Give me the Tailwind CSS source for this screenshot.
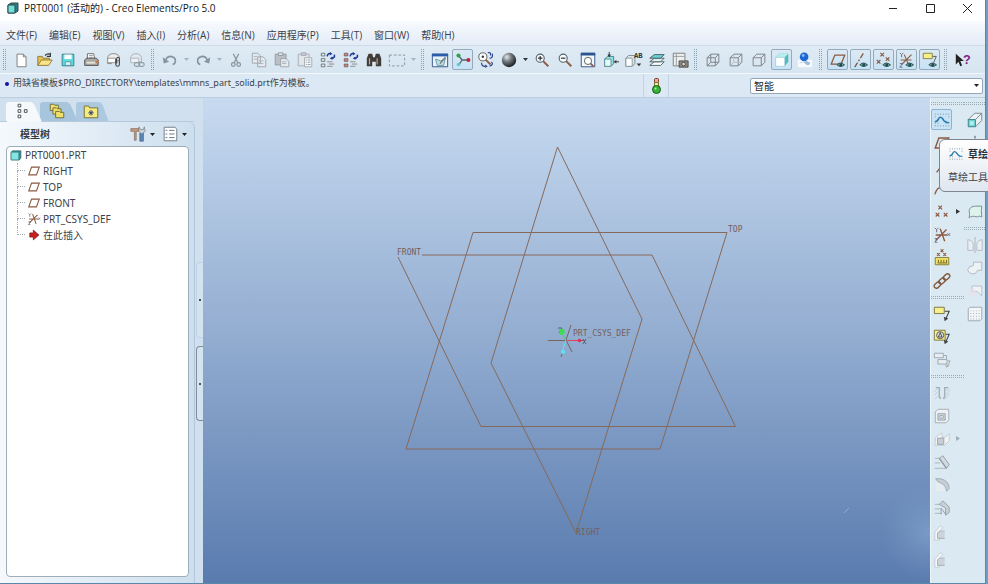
<!DOCTYPE html>
<html lang="zh-CN">
<head>
  <meta charset="UTF-8">
  <meta name="viewport" content="width=device-width, initial-scale=1">
  <title>PRT0001 (活动的) - Creo Elements/Pro 5.0</title>
  <script src="https://cdn.jsdelivr.net/npm/@tailwindcss/browser@4"></script>
</head>
<body class="h-screen overflow-hidden flex bg-[#6b9fc6] font-['Open_Sans','Noto_Sans_CJK_SC',sans-serif] text-[10px] leading-4 text-[#3c4148]">

  <div class="relative flex-1 min-w-0 mr-[2px] flex flex-col bg-[#dce9f4] border-r border-b border-[#5b88a8]">

    <!-- Title bar -->
    <header class="h-[21px] shrink-0 bg-white flex items-start pl-[6px] text-[#16181c]">
      <svg class="w-4 h-4 shrink-0" viewBox="0 0 16 16"><path d="M2 5l3-2h7v8l-3 2H2z" fill="#2e7f84" stroke="#31484e"/><path d="M2 5h7v8H2z" fill="#6fe0d8" stroke="#31484e"/></svg>
      <h1 class="pl-[2px]">PRT0001 (活动的) - Creo Elements/Pro 5.0</h1>
      <div class="ml-auto flex">
        <button aria-label="最小化" class="w-[37px] h-4 flex justify-center items-center"><svg class="w-3 h-3" viewBox="0 0 12 12" fill="none" stroke="#222"><path d="M2 6.500h8"/></svg></button>
        <button aria-label="最大化" class="w-[37px] h-4 flex justify-center items-center"><svg class="w-3 h-3" viewBox="0 0 12 12" fill="none" stroke="#222"><path d="M2.500 2.500h8v8h-8z"/></svg></button>
        <button aria-label="关闭" class="w-[37px] h-4 flex justify-center items-center"><svg class="w-3 h-3" viewBox="0 0 12 12" fill="none" stroke="#222"><path d="M2 2l9 9M11 2l-9 9"/></svg></button>
      </div>
    </header>

    <!-- Menu -->
    <nav id="menu" class="h-[25px] shrink-0 flex items-center gap-3 pl-[6px] pt-1 bg-linear-to-b from-[#f8fafe] to-[#e4ecf7] border-b border-[#cfdbe6]"></nav>

    <!-- Toolbars -->
    <div id="toolbar" class="h-[27px] shrink-0 flex items-center bg-linear-to-b from-[#dfebf5] to-[#d6e5f0]"></div>

    <!-- Message line and filter -->
    <div class="h-[25px] shrink-0 flex items-stretch border-y border-t-[#f3f8fc] border-b-[#b9cfe0] bg-[#dce9f4]">
      <div class="flex-1 flex items-start gap-1 pl-[5px] pt-px">
        <span class="w-1 h-1 mt-[7px] rounded-full bg-[#1414a8]"></span>
        <p class="font-['Noto_Sans','Noto_Sans_CJK_SC',sans-serif] text-[9px] whitespace-nowrap">用缺省模板$PRO_DIRECTORY\templates\mmns_part_solid.prt作为模板。</p>
      </div>
      <div class="w-[26px] border-x border-[#c3d3df] flex justify-center items-center">
        <svg class="w-4 h-[18px]" viewBox="0 0 16 18"><rect x="6.500" y="1.500" width="4" height="4" rx="1" fill="#f0a890" stroke="#743c2c"/><rect x="6.500" y="5.500" width="4" height="4" fill="#f3e9a0" stroke="#7b7430"/><circle cx="8.500" cy="12.500" r="4" fill="#36b336" stroke="#1a5a1a"/><circle cx="7.500" cy="11.500" r="1" fill="#c5f2c0"/></svg>
      </div>
      <div class="w-[316px] flex items-start justify-end pt-1 pr-[2px]">
        <div class="relative w-[233px]">
          <select aria-label="过滤器" class="appearance-none block w-full h-4 leading-[14px] pl-[3px] bg-white border border-[#93a7b6] rounded-xs text-[#222]"><option>智能</option></select>
          <svg class="absolute right-1 top-[6px] w-[5px] h-[3px] pointer-events-none" viewBox="0 0 5 3"><path d="M0 0h5L2.500 3z" fill="#222"/></svg>
        </div>
      </div>
    </div>

    <div class="flex-1 min-h-0 flex">

      <!-- Navigator -->
      <aside class="w-[203px] shrink-0 flex flex-col bg-[#d0e0ef]">
        <div role="tablist" class="h-6 shrink-0 relative">
          <svg class="w-full h-full" viewBox="0 0 203 24" preserveAspectRatio="none">
            <path d="M76 24V7q0-3 3-3h19q3 0 5 4l6 16z" fill="#adc9e0"/>
            <path d="M40 24V7q0-3 3-3h23q3 0 5 4l7 16z" fill="#a8c5de"/>
            <path d="M6 24V7q0-3 3-3h21q3 0 5 4l7 16z" fill="#f6f9fc"/>
            <path d="M0 23.500h194" stroke="#b6cadb"/><path d="M7 23.500h34" stroke="#f6f9fc"/>
          </svg>
          <div class="absolute inset-0 flex items-center gap-4 pl-[14px] pt-[2px]" id="tabs"></div>
        </div>
        <div class="flex-1 min-h-0 mr-2 rounded-tr-md border-r border-[#b2c8da] bg-linear-to-r from-[#f5f9fd] to-[#cddfee] flex flex-col pl-[6px] pr-[5px] pb-[6px]">
          <div class="h-6 shrink-0 flex items-center">
            <h2 class="pl-[14px] font-bold text-[#333a42]">模型树</h2>
            <div id="treeTools" class="ml-auto flex items-center"></div>
          </div>
          <ul id="tree" class="flex-1 min-h-0 bg-white border border-[#9eadb8] rounded-sm pl-[2px] font-['Noto_Sans','Noto_Sans_CJK_SC',sans-serif]"></ul>
        </div>
        <!-- Splitter handles lie over the panel edge -->
        <div class="absolute left-[196px] top-[262px] w-[7px] h-[76px] border border-r-0 border-[#c0d3e4] rounded-l-sm bg-[#d4e3f0] flex items-center justify-center"><span class="w-[2px] h-[2px] bg-[#455]"></span></div>
        <div class="absolute left-[196px] top-[346px] w-[7px] h-[75px] border border-r-0 border-[#7d8d9a] rounded-l-sm bg-[#d4e3f0] flex items-center justify-center"><span class="w-[2px] h-[2px] bg-[#455]"></span></div>
      </aside>

      <!-- Graphics window -->
      <main class="flex-1 min-w-0 bg-linear-to-b from-[#c7daf0] via-[#92acd0] to-[#597bae]">
        <svg class="w-full h-full" viewBox="203 98 727 485" preserveAspectRatio="xMidYMid meet">
          <defs>
            <radialGradient id="glow"><stop offset="0" stop-color="#86a9cf" stop-opacity=".6"/><stop offset="1" stop-color="#7d9dc6" stop-opacity="0"/></radialGradient>
          </defs>
          <ellipse cx="930" cy="533" rx="50" ry="48" fill="url(#glow)"/>
          <path d="M844 513l5-5" stroke="#90abd0"/>
          <g fill="none" stroke="#86695a">
            <path d="M557.500 147L642 319l-66 214-85-170z"/>
            <path d="M473 232.500h254l-67 216.500H406z"/>
            <path d="M398 257l83 169.500h254.500L652 255H422"/>
          </g>
          <g fill="none" stroke-width="1">
            <path d="M548 340.500h37M566 340l5-15M566 340l6 12M561 357l2-6" stroke="#76645f"/>
            <path d="M567 340.500h12" stroke="#e0405c"/><path d="M566 340l-4 12" stroke="#5be4f4"/><path d="M566 340l-5-8" stroke="#42d566"/>
            <path d="M583 339l3 5M586 339l-3 5M558 328h4l-3 5" stroke="#5d6070"/>
          </g>
          <circle cx="579.500" cy="340.500" r="1.800" fill="#e22f4f"/><circle cx="563" cy="352" r="2" fill="#5be4f4"/><path d="M559 329l5 0 1 4-5 2z" fill="#3fdb55"/>
          <g font-family="DejaVu Sans Mono, monospace" font-size="8" fill="#75605a">
            <text x="397" y="255">FRONT</text>
            <text x="728" y="232">TOP</text>
            <text x="573" y="336">PRT_CSYS_DEF</text>
            <text x="576" y="535">RIGHT</text>
          </g>
        </svg>
      </main>

      <!-- Feature toolbars -->
      <aside class="w-[55px] shrink-0 flex items-start bg-[#dbe9f3] border-l border-[#eef5fa]">
        <div id="featureA" class="w-[33px]"></div>
        <div id="featureB" class="flex-1"></div>
      </aside>
    </div>
  </div>

  <!-- Tooltip of the sketch tool -->
  <div class="absolute top-[139px] left-[calc(100%-49px)] right-0 h-[54px] overflow-hidden">
    <div role="tooltip" class="w-24 h-[53px] pl-2 pt-[6px] rounded-md border border-[#7d8791] bg-linear-to-b from-white to-[#dfe6f0] whitespace-nowrap">
      <div class="flex items-center gap-1 font-bold text-[#26303c]" id="tipHead"></div>
      <p class="pt-[7px]">草绘工具</p>
    </div>
  </div>

  <script>
    const eye = '<path d="M9 15.500q3.500-4 8 0-4 3.500-8 0z" fill="#a9cfc9" stroke="#3d6260" stroke-width="1.200"/><circle cx="13" cy="15.500" r="1.700" fill="#174f52"/>';
    const sheet = '<path d="M4.500 3.500h7l3 3v11h-10z" fill="#fff" stroke="#777"/><path d="M11.500 3.500v3h3" fill="none" stroke="#777"/>';
    const lens = (x) => `<path d="M11 11l6 6" stroke="#8c5b49" stroke-width="2.200"/><circle cx="8" cy="8" r="4.500" fill="#f5fafc" stroke="#57616b" stroke-width="1.200"/><path d="${x}" stroke="#333" stroke-width="1.300"/>`;
    const wire = '<path d="M3.500 7.500h9v9h-9zM3.500 7.500l4-4h9v9l-4 4M12.500 7.500l4-4" fill="none" stroke="#777b80"/>';
    const sketch = '<g fill="#55707f"><path d="M2 3h1v1H2zM5 3h1v1H5zM8 3h1v1H8zM11 3h1v1h-1zM14 3h1v1h-1zM17 3h1v1h-1zM2 6h1v1H2zM17 6h1v1h-1zM2 13h1v1H2zM5 13h1v1H5zM14 13h1v1h-1zM2 16h1v1H2zM5 16h1v1H5zM8 16h1v1H8zM11 16h1v1h-1zM14 16h1v1h-1zM17 16h1v1h-1z"/></g><path d="M2 12q3 0 4-3 2-4 5 0 2 4 7 4" fill="none" stroke="#2c7cae" stroke-width="1.800"/>';
    const regen = (c) => `<g fill="${c}" stroke="#555" stroke-width=".8"><path d="M2.500 2.500h4v3h-4zM2.500 8.500h4v3h-4zM2.500 14.500h4v3h-4z"/></g><path d="M9 6q1-4 4-3M17 4q1 4-3 4" fill="none" stroke="#1d3d96" stroke-width="1.800"/><path d="M12 1l3 2-3 2zM15 6l-3 2 3 2z" fill="#1d3d96"/><path d="M9 12h6M11 14.500h6M9 17h6" stroke="#888"/>`;
    const xs = (pts, c, r) => pts.map(([x, y]) => `<path d="M${x - r} ${y - r}l${2 * r} ${2 * r}M${x + r} ${y - r}l${-2 * r} ${2 * r}" stroke="${c}" stroke-width="1.300"/>`).join('');

    const icons = {
      new: sheet,
      open: '<path d="M2 16V6h5l1 2h7v2" fill="#e4c252" stroke="#8b7437"/><path d="M2 16l4-6h12l-4 6z" fill="#fbe38a" stroke="#8b7437"/><path d="M10 5q3-3 6-1m0-2v4h-4" fill="none" stroke="#333" stroke-width="1.200"/>',
      save: '<path d="M3.500 3.500h13v13h-13z" fill="#5fd8de" stroke="#347f88"/><path d="M6 4h8v5H6z" fill="#fff"/><path d="M7 12h6v4H7z" fill="#dff3f3" stroke="#347f88" stroke-width=".7"/>',
      print: '<path d="M6 9V3h7l1 6" fill="#fff" stroke="#666"/><path d="M8 5h4M8 7h4" stroke="#999"/><path d="M3 10l2-2h11l2 2v6H3z" fill="#aba8a5" stroke="#4e4c4b"/><path d="M5 12h10v2H5z" fill="#e7e4d8"/><path d="M15 11h2v2h-2z" fill="#e66a22"/>',
      mail: '<path d="M3 13V8q0-4 5-5h3q5 1 5 5v3H7v3H3z" fill="#eeeded" stroke="#83817e"/><path d="M3 8h9v5H3z" fill="#fff" stroke="#918d88"/><path d="M12 9v6q0 2 2 2t2-2V9q0-2-1.500-2T13 9v5" fill="none" stroke="#444" stroke-width="1.200"/>',
      link: '<path d="M3 12V8q0-4 5-5h2q5 1 5 5v4z" fill="#e4e9ee" stroke="#a3adb6"/><path d="M3 8h9v5H3z" fill="#edf1f4" stroke="#a9b2ba"/><rect x="7" y="13" width="6" height="4" rx="2" fill="none" stroke="#929ca5" stroke-width="1.300"/><rect x="12" y="13" width="6" height="4" rx="2" fill="none" stroke="#929ca5" stroke-width="1.300"/>',
      undo: '<path d="M5 11q1-5 6-5 5 1 5 5 0 3-3 4" fill="none" stroke="#8594a1" stroke-width="1.800"/><path d="M2 7l1 7 6-2z" fill="#8594a1"/>',
      redo: '<path d="M15 11q-1-5-6-5-5 1-5 5 0 3 3 4" fill="none" stroke="#8594a1" stroke-width="1.800"/><path d="M18 7l-1 7-6-2z" fill="#8594a1"/>',
      cut: '<path d="M7 3l5 10M13 3L8 13" stroke="#8a949d" stroke-width="1.400"/><circle cx="7" cy="15" r="2" fill="none" stroke="#8a949d" stroke-width="1.400"/><circle cx="13" cy="15" r="2" fill="none" stroke="#8a949d" stroke-width="1.400"/>',
      copy: '<path d="M2.500 2.500h6l3 3v8h-9zM8.500 6.500h6l3 3v8h-9z" fill="#e7ebef" stroke="#98a1aa"/><path d="M4 6h4M4 9h4M10 11h5M10 14h5" stroke="#a5adb5"/>',
      paste: '<path d="M2.500 3.500h12v12h-12z" fill="#b9bfc4" stroke="#8f989f"/><path d="M6 2h5v3H6z" fill="#dfe3e6" stroke="#8f989f"/><path d="M8.500 8.500h6l3 3v6h-9z" fill="#e9edf0" stroke="#98a1aa"/><path d="M10 12h5M10 14h5" stroke="#a5adb5"/>',
      pasteSpecial: '<path d="M2.500 3.500h12v13h-12z" fill="#e1e6ea" stroke="#a1a9b0"/><path d="M6 2h5v3H6z" fill="#c7cdd2" stroke="#a1a9b0"/><path d="M9.500 7.500h8v10h-8z" fill="#f4f6f8" stroke="#a1a9b0"/><path d="M11 10h1m1 0h3M11 12.500h1m1 0h3M11 15h1m1 0h3" stroke="#9099a2"/>',
      regen: regen('#d5f0ee'),
      regenAll: regen('#e5817c'),
      find: '<path d="M2 8l2-5h4l1 4h2l1-4h4l2 5v9h-6v-5H8v5H2z" fill="#423c38"/><path d="M5 8v7M13.500 8v7" stroke="#b7aca3" stroke-width="1.300"/>',
      select: '<path d="M1.500 4.500h17v12h-17z" fill="none" stroke="#84919b" stroke-dasharray="3 2"/>',
      repaint: '<path d="M1.500 3.500h17v14h-17z" fill="#e8f2fa" stroke="#294d88"/><path d="M1 3h18v3H1z" fill="#2b5caa"/><path d="M5 9l2 7h7l2-8-5 3z" fill="#c1dfe4" stroke="#6497a1"/><path d="M10 14l6-7" stroke="#777" stroke-width="1.500"/>',
      spin: '<path d="M5 5l4 5h7M9 10l-4 6" fill="none" stroke="#496e70" stroke-width="1.500"/><circle cx="5" cy="5" r="2.300" fill="#31a246"/><circle cx="16" cy="10" r="2.300" fill="#bb273b"/><circle cx="5" cy="15" r="2" fill="#60c9cd"/>',
      orient: '<path d="M9 9l6 6" stroke="#8c5b49" stroke-width="2"/><circle cx="6.500" cy="6.500" r="4.500" fill="#fff" stroke="#555"/><circle cx="6.500" cy="6.500" r="1.400" fill="#444"/><path d="M12 2q4-1 3 3M17 3q1 5-3 5M5 13q0 4 4 4M16 12q3 3-2 5" fill="none" stroke="#2b4694" stroke-width="1.300"/><path d="M9 15l3 2-3 2z" fill="#2b4694"/>',
      ball: '<defs><radialGradient id="bg" cx=".35" cy=".3" r=".7"><stop offset="0" stop-color="#e5e9ec"/><stop offset=".45" stop-color="#747a80"/><stop offset="1" stop-color="#202326"/></radialGradient></defs><circle cx="10" cy="10" r="8" fill="url(#bg)"/>',
      zoomIn: lens('M5.500 8h5M8 5.500v5'),
      zoomOut: lens('M5.500 8h5'),
      refit: '<path d="M2.500 2.500h15v15h-15z" fill="#f3f8fb" stroke="#2d4e7d"/><path d="M2 2h16v3H2z" fill="#2b5493"/><path d="M12 13l4 4" stroke="#8c5b49" stroke-width="2"/><circle cx="10" cy="11" r="4" fill="#fff" stroke="#555"/>',
      reorient: '<path d="M3 9l3-3h7v8l-3 3H3z" fill="#8de0df" stroke="#477c7e"/><path d="M3 9h7v8H3z" fill="#e8fafa" stroke="#5a9294"/><path d="M8 1v5M19 12h-5" stroke="#333"/><path d="M6 4h4L8 7zM16 10v4l-3-2z" fill="#333"/>',
      views: '<path d="M1 8l3-3h7v9l-3 3H1z" fill="#d8e6e8" stroke="#7b8588"/><path d="M1 8h7v9H1z" fill="#fff" stroke="#8a9598"/><path d="M13 14h5l-2.500 3z" fill="#333"/><text x="10" y="8" font-size="8" font-family="Liberation Mono" font-weight="bold" fill="#333">AB</text>',
      layers: '<g stroke="#4a5a60"><path d="M2 16l5-4h11l-4 4z" fill="#fff"/><path d="M2 12l5-4h11l-4 4z" fill="#d9eef0"/><path d="M2 8l5-4h11l-4 4z" fill="#69cfd4"/></g>',
      viewMgr: '<path d="M2.500 2.500h13v14h-13z" fill="#edf0f0" stroke="#777"/><path d="M6 3v13M3 6h12" stroke="#999"/><path d="M9 11h10v7H9z" fill="#8d877e" stroke="#4e4943"/><circle cx="14" cy="14.500" r="2" fill="#ddd" stroke="#444"/>',
      wireframe: wire + '<path d="M7.500 3.500v9h9M7.500 12.500l-4 4" fill="none" stroke="#777b80"/>',
      hidden: wire + '<path d="M7.500 4v8.500H16M7.500 12.500l-4 4" fill="none" stroke="#b4babf"/>',
      noHidden: wire,
      shaded: '<path d="M3 7l4-4h10v9l-4 5H3z" fill="#4dbcc0"/><path d="M3 7l4-4h10l-4 4z" fill="#b9eeee"/><path d="M3 7h10v10H3z" fill="#fdffff" stroke="#a6cdd2" stroke-width=".7"/>',
      realism: '<path d="M2 10h16v8H2z" fill="#f7fafd"/><path d="M3 14q5-4 7 0 4 4 6-1l-4-2z" fill="#9ebbdc"/><circle cx="9" cy="6.500" r="4.800" fill="#1e66d4"/><circle cx="8" cy="5" r="1.600" fill="#83b8fb"/>',
      dPlane: '<path d="M2.500 14.500l4-10h11l-4 10z" fill="none" stroke="#8b5a41" stroke-width="1.400"/>' + eye,
      dAxis: '<path d="M3 18L13 2" stroke="#8b5a41" stroke-width="1.500" stroke-dasharray="6 2 2 2"/>' + eye,
      dPoint: xs([[8, 4], [4, 12], [14, 9]], '#8b5a41', 2) + eye,
      dCsys: '<path d="M4 15L15 4M7 4l5 12M3 10h12" stroke="#8b5a41" stroke-width="1.200"/><path d="M2 2l2 2 2-2M4 4v3M2 14h3l-3 4h3" stroke="#667" fill="none"/>' + eye,
      dNote: '<path d="M2.500 2.500h10v6h-10z" fill="#f5ef8a" stroke="#827d3a"/><path d="M13 6h4l-3 7" fill="none" stroke="#555"/>' + eye,
      help: '<path d="M2 3v12l3-3 2 5 2-1-2-5h4z" fill="#222"/><text x="10" y="14" font-size="14" font-weight="bold" font-family="Liberation Sans" fill="#7c2484">?</text>',
      sketch,
      plane: '<path d="M2.500 15.500l4-11h11l-4 11z" fill="none" stroke="#8b5a41" stroke-width="1.600"/>',
      axis: '<path d="M4 17L15 3" stroke="#8b5a41" stroke-width="1.400" stroke-dasharray="5 2"/>',
      curve: '<path d="M2 16q3-9 7-7 4 3 8-5" fill="none" stroke="#8b5a41" stroke-width="1.400"/>',
      points: xs([[8, 5], [5, 13], [14, 13]], '#8b5a41', 2),
      csys: '<path d="M3 16L15 4M8 3l5 14M3 10h13" stroke="#8b5a41" stroke-width="1.500"/><path d="M2 2l2 2 2-2M4 4v3M2 14h3l-3 4h3M16 8l3 3m0-3l-3 3" stroke="#667" fill="none"/>',
      field: xs([[6, 6], [13, 6], [10, 2]], '#8b5a41', 1.500) + '<path d="M2.500 9.500h15v8h-15z" fill="#f2e266" stroke="#80762e"/><path d="M6 15v-3M9 15v-3M12 15v-3M15 15v-3M5 15.500h11" stroke="#635a20"/>',
      chain: '<g fill="none" stroke="#80583d" stroke-width="1.500"><rect x="1" y="12" width="8" height="5" rx="2.500" transform="rotate(-42 5 14.500)"/><rect x="6" y="7.500" width="8" height="5" rx="2.500" transform="rotate(-42 10 10)"/><rect x="11" y="3" width="8" height="5" rx="2.500" transform="rotate(-42 15 5.500)"/></g>',
      note: '<path d="M1.500 2.500h11v7h-11z" fill="#f8f08a" stroke="#77723a"/><path d="M13 7h5l-4 9" fill="none" stroke="#444" stroke-width="1.200"/><path d="M12 13l1 5 4-3z" fill="#444"/>',
      noteEdit: '<path d="M1.500 2.500h12v11h-12z" fill="#f8f08a" stroke="#77723a"/><circle cx="8" cy="8" r="4" fill="#ddd" stroke="#555"/><path d="M6 10l2-5 2 5z" fill="none" stroke="#444"/><path d="M14 7h4l-4 9" fill="none" stroke="#444" stroke-width="1.200"/><path d="M12 13l1 5 4-3z" fill="#444"/>',
      noteOff: '<path d="M1.500 2.500h10v5h-10zM5.500 9.500h10v5h-10z" fill="#e7edf1" stroke="#9aa4ac"/><path d="M12 5h3v4M16 11h3l-3 6m-2-2l1 3 3-2" fill="none" stroke="#9aa4ac"/>',
      hole: '<path d="M3 4h4v9q0 3 2 3M17 4h-4v9q0 3-2 3" fill="none" stroke="#a3adb5" stroke-width="1.500"/><path d="M1 9l4-4M1 13l5-5M2 17l5-5M14 8l4-3M14 12l5-5M13 17l5-6" stroke="#c1cad1"/>',
      shell: '<path d="M2.500 5.500l3-3h12v12l-3 3h-12z" fill="#edf1f4" stroke="#a0a9b1"/><path d="M5.500 7.500h8v7h-8z" fill="#dce3e8" stroke="#8d979f"/><path d="M7.500 9.500h4v3h-4z" fill="none" stroke="#a0a9b1"/>',
      rib: '<path d="M2 17l1-9 7-5v5h4l4-4v8l-5 5H2z" fill="#f0f4f7" stroke="#c3cad0"/><path d="M5 9h7v7H5z" fill="#c6ced4" stroke="#98a2aa"/>',
      draft: '<path d="M2 6h6M2 11h6M2 17h13" stroke="#b6bfc6" stroke-width="1.300"/><path d="M7 6l4-3 7 10-3 4z" fill="#d3dae0" stroke="#929ca4"/><path d="M7 6l8 11" stroke="#929ca4" stroke-width="1.500"/>',
      round: '<path d="M3 3h5q10 2 10 11l-3 3q0-8-9-10z" fill="#c6ced5" stroke="#a0aab2"/><path d="M3 6v11h10q0-7-8-10" fill="#e6ecf0"/>',
      chamfer: '<path d="M2 6h6M2 11h6M2 16h8" stroke="#b6bfc6" stroke-width="1.300"/><path d="M7 6l4-4 7 7v6l-4 3V10z" fill="#c9d1d7" stroke="#929ca4"/><path d="M9 17v-7l5 7" fill="none" stroke="#929ca4"/>',
      part: '<path d="M2 18V9l6-7 3 2-4 4v10z" fill="#f4f7f9" stroke="#c0c9d0"/><path d="M5 9h8v7H5z" fill="#cdd4d9"/><path d="M13 8H7l-2 2v6h8" fill="none" stroke="#a4adb5"/>',
      extrude: '<path d="M2.500 9.500l7-7h8v8l-7 7z" fill="#e9f0f3" stroke="#75828a"/><path d="M2.500 9.500h8v8h-8z" fill="#6fd7d9" stroke="#397c82"/><path d="M4.500 11.500h4v4h-4z" fill="#b5efef"/><path d="M10.500 9.500l7-7" stroke="#75828a"/>',
      revolve: '<path d="M10 2v16" stroke="#444" stroke-dasharray="3 1"/><path d="M5 8q5-4 10 0v6q-5 3-10 0z" fill="#d8ecec" stroke="#71868c"/>',
      sweep: '<path d="M3 14q5-9 13-7l1 4q-8-1-11 5z" fill="#c8e8e7" stroke="#71868c"/>',
      blend: '<path d="M3 12q5-8 8-2 3 6 6-2" fill="none" stroke="#71868c" stroke-width="1.500"/>',
      surface: '<path d="M3.500 8.500q1-5 7-5h7q-1 5 0 12-3-2-5 0-6-2-9 1 1-4 0-8z" fill="#dff3ed" stroke="#6d8b8d"/>',
      mirror: '<path d="M2 4q6 1 6 6v6H2zM18 4q-6 1-6 6v6h6z" fill="#e8eef2" stroke="#b1bbc3"/><path d="M10 1v18" stroke="#a8b2ba"/>',
      merge: '<path d="M8.500 3.500h9v9h-4.500q-2 5-6 4-5-1-5-5 1-4 6-4z" fill="#edf2f5" stroke="#acb6be"/>',
      trim: '<path d="M6.500 4.500h11v11l-5-5h-6z" fill="#eef2f5" stroke="#b6bfc6"/><circle cx="7" cy="12" r="4.500" fill="#e9dfe8" fill-opacity=".6"/>',
      pattern: '<path d="M2.500 4.500l2-2h13v13l-2 2h-13z" fill="#f4f7f9" stroke="#98a3ab"/><g fill="#9ba6ae"><path d="M5 6h1v1H5zM8 6h1v1H8zM11 6h1v1h-1zM14 6h1v1h-1zM5 9h1v1H5zM8 9h1v1H8zM11 9h1v1h-1zM14 9h1v1h-1zM5 12h1v1H5zM8 12h1v1H8zM11 12h1v1h-1zM14 12h1v1h-1zM5 15h1v1H5zM8 15h1v1H8zM11 15h1v1h-1zM14 15h1v1h-1z"/></g>',
      tabTree: '<path d="M4.500 2.500h3v3h-3zM4.500 8.500h3v3h-3zM4.500 14.500h3v3h-3zM11.500 8.500h3v3h-3z" fill="#fff" stroke="#444"/>',
      tabFolders: '<g fill="#eee16a" stroke="#6d6831"><path d="M2.500 2.500h4l1 1h4v6h-9z"/><path d="M5.500 6.500h4l1 1h4v6h-9z"/><path d="M8.500 10.500h4l1 1h4v6h-9z"/></g>',
      tabFav: '<path d="M2.500 4.500h5l1 2h9v11h-15z" fill="#f6eb7c" stroke="#6d6831"/><path d="M10 9v6M7 12h6M8 10l4 4M12 10l-4 4" stroke="#2b3b78"/>',
      tools: '<path d="M2 4h9v3H8v10H6V7H2z" fill="#c79a72" stroke="#7c6655" stroke-width=".7"/><path d="M12 9h4v9h-4z" fill="#5a85b6" stroke="#3c5d85" stroke-width=".7"/><path d="M11 2l2 3h3l1-3 1 5-4 3-3-3z" fill="#ccd3d8" stroke="#6b747b" stroke-width=".7"/>',
      list: '<path d="M3.500 2.500h12l2 2v13h-14z" fill="#fff" stroke="#6b747e"/><path d="M5 6h2M5 10h2M5 14h2M9 6h6M9 10h6M9 14h6" stroke="#596b80"/>',
      cube: '<path d="M3 6l2-2h12v10l-2 3H3z" fill="#2e8d92" stroke="#3c6468"/><path d="M3 6h11v11H3z" fill="#84e6e2" stroke="#3c8185"/>',
      insert: '<path d="M4 7h5V3l8 7-8 7v-4H4z" fill="#cc1f1f" stroke="#6e1414"/>',
    };

    const svg = (name, cls = 'w-5 h-5') => `<svg class="${cls} shrink-0" viewBox="0 0 20 20" fill="none">${icons[name]}</svg>`;
    const boxes = {
      plain: 'w-[23px] h-[23px] shrink-0 flex items-center justify-center',
      active: 'w-[21px] h-[21px] mx-px shrink-0 flex items-center justify-center rounded-xs border border-[#93aabd] bg-linear-to-b from-[#dde9f3] to-[#c6e2f6]',
      side: 'w-[21px] h-[23px] shrink-0 flex items-center justify-center',
      sideActive: 'w-[21px] h-[21px] my-px shrink-0 flex items-center justify-center rounded-xs border border-[#8fb3cf] bg-[#c9e3f6]',
    };
    const button = (name, box) => `<button aria-label="${name}" class="${boxes[box]}">${svg(name, 'w-[18px] h-[18px]')}</button>`;
    const arrow = (c) => `<button aria-label="more" class="w-[10px] h-5 shrink-0 flex items-center justify-center"><svg class="w-[5px] h-[3px]" viewBox="0 0 5 3"><path d="M0 0h5L2.500 3z" fill="${c}"/></svg></button>`;

    document.getElementById('menu').innerHTML = ['文件(F)', '编辑(E)', '视图(V)', '插入(I)', '分析(A)', '信息(N)', '应用程序(P)', '工具(T)', '窗口(W)', '帮助(H)']
      .map(t => `<button class="whitespace-nowrap">${t}</button>`).join('');

    // "|" draws a grip, "v" and "V" a disabled and an enabled drop arrow, "*" marks a pressed button
    document.getElementById('toolbar').innerHTML = '| new open save print mail link | undo v redo v cut copy paste pasteSpecial regen regenAll find select v | repaint *spin orient ball V zoomIn zoomOut refit reorient views layers viewMgr | wireframe hidden noHidden *shaded realism | *dPlane *dAxis *dPoint *dCsys *dNote | help'
      .split(' ').map(n => {
        if (n === '|') return '<span class="w-[3px] h-[21px] ml-[3px] mr-1 shrink-0 border-x border-dotted border-[#8b9fae]"></span>';
        if (n === 'v') return arrow('#a8b4be');
        if (n === 'V') return arrow('#333');
        return n[0] === '*' ? button(n.slice(1), 'active') : button(n, 'plain');
      }).join('');

    const flyout = (c) => `<svg class="w-1 h-[5px] ml-1" viewBox="0 0 4 5"><path d="M0 0v5l4-2.500z" fill="${c}"/></svg>`;
    function renderSide(id, names) {
      document.getElementById(id).innerHTML = names.split(' ').map(n => {
        if (n === '-') return '<div class="h-[10px] flex items-center"><span class="w-full h-[3px] border-y border-dotted border-[#9aabb8]"></span></div>';
        if (n === '*sketch') return `<div class="flex">${button('sketch', 'sideActive')}</div>`;
        const end = n === 'points' ? flyout('#333') : n === 'rib' ? flyout('#a3adb5') : '';
        const row = n === 'part' ? 'h-[27px] flex items-center' : 'h-[23px] flex items-center';
        return `<div class="${row}">${button(n, 'side')}${end}</div>`;
      }).join('');
    }
    renderSide('featureA', '- *sketch plane axis curve points csys field chain - note noteEdit noteOff - hole shell rib draft round chamfer part part');
    renderSide('featureB', '- extrude revolve sweep blend surface - mirror merge trim pattern');

    document.getElementById('tabs').innerHTML = ['tabTree', 'tabFolders', 'tabFav']
      .map(n => `<button role="tab" aria-label="${n}">${svg(n, 'w-[18px] h-[18px]')}</button>`).join('');
    document.getElementById('treeTools').innerHTML = svg('tools', 'w-[18px] h-[18px]') + arrow('#222') + '<span class="w-1"></span>' + svg('list', 'w-[18px] h-[18px]') + arrow('#222');
    document.getElementById('tipHead').innerHTML = svg('sketch', 'w-4 h-4') + '草绘';

    const items = [['plane', 'RIGHT'], ['plane', 'TOP'], ['plane', 'FRONT'], ['csys', 'PRT_CSYS_DEF'], ['insert', '在此插入']];
    document.getElementById('tree').innerHTML = `<li class="flex items-center gap-[2px]">${svg('cube', 'w-[14px] h-[14px]')}PRT0001.PRT</li>` +
      items.map(([icon, label], i) => `
        <li class="flex items-center gap-[2px] pl-2">
          <span class="w-2 h-4 flex flex-col"><span class="h-2 border-l border-b border-dotted border-[#a5adb5]"></span><span class="${i < 4 ? 'h-2 border-l border-dotted border-[#a5adb5]' : 'h-2'}"></span></span>
          ${svg(icon, 'w-[14px] h-[14px]')}${label}
        </li>`).join('');
  </script>
</body>
</html>
